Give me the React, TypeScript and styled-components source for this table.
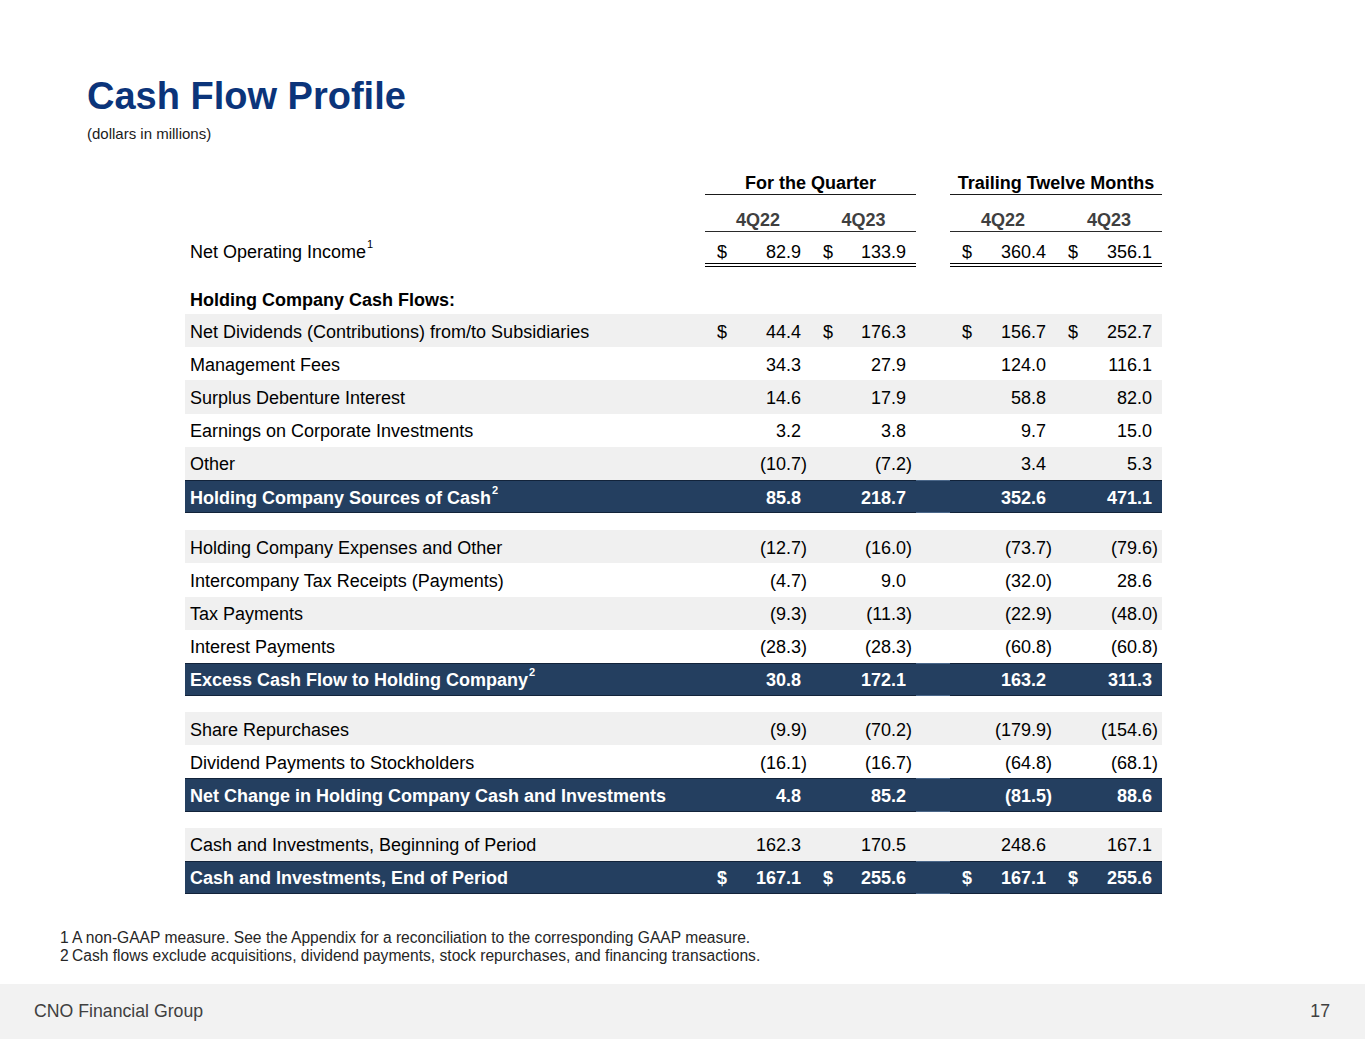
import React from "react";
import styled, { createGlobalStyle, css } from "styled-components";

const GlobalStyle = createGlobalStyle`
  html, body { margin: 0; padding: 0; background: #ffffff; }
  body { font-family: "Liberation Sans", Arial, sans-serif; color: #000; }
`;

const Slide = styled.div`
  width: 1365px;
  height: 1055px;
  position: relative;
  overflow: hidden;
  display: flex;
  flex-direction: column;
`;

const Header = styled.header`
  padding: 77px 0 0 87px;
`;

const Title = styled.h1`
  margin: 0;
  font-size: 38px;
  line-height: 38px;
  font-weight: 700;
  color: #0b347a;
`;

const Subtitle = styled.div`
  margin-top: 10px;
  font-size: 15px;
  line-height: 18px;
  color: #1a1a1a;
`;

const TableWrap = styled.section`
  padding: 29px 0 0 185px;
  width: 977px;
`;

const COLS = "520px 106px 105px 34px 106px 106px";

const Row = styled.div`
  display: grid;
  grid-template-columns: ${COLS};
  font-size: 18px;
`;

const GroupHead = styled.div<{ $col: string }>`
  grid-column: ${(p) => p.$col};
  height: 23px;
  box-sizing: border-box;
  border-bottom: 1px solid #1a1a1a;
  text-align: center;
  font-weight: 700;
  line-height: 23px;
  color: #000;
`;

const PeriodHead = styled.div<{ $col: number }>`
  grid-column: ${(p) => p.$col};
  height: 37px;
  box-sizing: border-box;
  padding-top: 14px;
  line-height: 22px;
  border-bottom: 1px solid #2a2a2a;
  text-align: center;
  font-weight: 700;
  color: #3f3f3f;
`;

const Spacer = styled.div<{ $h: number }>`
  height: ${(p) => p.$h}px;
`;

type Variant = "plain" | "shade" | "total" | "noi" | "heading";

const Label = styled.div`
  padding-left: 5px;
  white-space: nowrap;
`;

const Value = styled.div`
  justify-content: space-between;
  padding-left: 12px;
  padding-right: 4px;
  white-space: nowrap;
`;

const Gap = styled.div``;

const DataRow = styled(Row)<{ $variant: Variant }>`
  height: ${(p) => (p.$variant === "heading" ? "48px" : p.$variant === "noi" ? "34px" : "33.2px")};
  background: ${(p) =>
    p.$variant === "shade" ? "#f0f0f0" : p.$variant === "total" ? "#243f60" : "transparent"};
  color: ${(p) => (p.$variant === "total" ? "#ffffff" : "#000000")};
  font-weight: ${(p) => (p.$variant === "total" || p.$variant === "heading" ? 700 : 400)};

  & > * {
    box-sizing: border-box;
    display: flex;
    align-items: center;
    padding-top: 3px;
  }

  ${(p) =>
    p.$variant === "total" &&
    css`
      & > * {
        border-top: 1px solid #12233a;
        border-bottom: 1px solid #12233a;
      }
      & > ${Gap} {
        border-top-color: #4a6688;
        border-bottom-color: #4a6688;
      }
    `}

  ${(p) =>
    p.$variant === "noi" &&
    css`
      & > * {
        align-items: flex-start;
        padding-top: 9px;
        line-height: 22px;
      }
      & > ${Value} {
        border-bottom: 4px double #000;
      }
    `}

  ${(p) =>
    p.$variant === "heading" &&
    css`
      & > * {
        align-items: flex-start;
        padding-top: 23px;
        line-height: 22px;
      }
    `}
`;

const Sup = styled.sup`
  font-size: 11px;
  line-height: 0;
  vertical-align: 0;
  position: relative;
  top: -10px;
  margin-left: 1px;
`;

const Hidden = styled.span`
  visibility: hidden;
`;

const Notes = styled.div`
  margin-top: 35px;
  padding-left: 60px;
  font-size: 15.6px;
  line-height: 18px;
  color: #262626;
`;

const NoteNum = styled.span`
  display: inline-block;
  width: 12px;
`;

const Footer = styled.footer`
  margin-top: 19px;
  height: 55px;
  background: #f2f2f2;
  display: flex;
  align-items: center;
  justify-content: space-between;
  padding: 0 35px 0 34px;
  font-size: 17.7px;
  color: #404040;
`;

const Num: React.FC<{ v: string }> = ({ v }) => {
  const neg = v.startsWith("(");
  return (
    <span>
      {v}
      {!neg && <Hidden>)</Hidden>}
    </span>
  );
};

const Values: React.FC<{ values: string[]; dollar?: boolean }> = ({ values, dollar }) => (
  <>
    <Value>
      <span>{dollar ? "$" : ""}</span>
      <Num v={values[0]} />
    </Value>
    <Value>
      <span>{dollar ? "$" : ""}</span>
      <Num v={values[1]} />
    </Value>
    <Gap />
    <Value>
      <span>{dollar ? "$" : ""}</span>
      <Num v={values[2]} />
    </Value>
    <Value>
      <span>{dollar ? "$" : ""}</span>
      <Num v={values[3]} />
    </Value>
  </>
);

type Line = { label: string; values: string[]; dollar?: boolean; sup?: string };
type Section = { rows: Line[]; total: Line };

const sections: Section[] = [
  {
    rows: [
      { label: "Net Dividends (Contributions) from/to Subsidiaries", values: ["44.4", "176.3", "156.7", "252.7"], dollar: true },
      { label: "Management Fees", values: ["34.3", "27.9", "124.0", "116.1"] },
      { label: "Surplus Debenture Interest", values: ["14.6", "17.9", "58.8", "82.0"] },
      { label: "Earnings on Corporate Investments", values: ["3.2", "3.8", "9.7", "15.0"] },
      { label: "Other", values: ["(10.7)", "(7.2)", "3.4", "5.3"] },
    ],
    total: { label: "Holding Company Sources of Cash", sup: "2", values: ["85.8", "218.7", "352.6", "471.1"] },
  },
  {
    rows: [
      { label: "Holding Company Expenses and Other", values: ["(12.7)", "(16.0)", "(73.7)", "(79.6)"] },
      { label: "Intercompany Tax Receipts (Payments)", values: ["(4.7)", "9.0", "(32.0)", "28.6"] },
      { label: "Tax Payments", values: ["(9.3)", "(11.3)", "(22.9)", "(48.0)"] },
      { label: "Interest Payments", values: ["(28.3)", "(28.3)", "(60.8)", "(60.8)"] },
    ],
    total: { label: "Excess Cash Flow to Holding Company", sup: "2", values: ["30.8", "172.1", "163.2", "311.3"] },
  },
  {
    rows: [
      { label: "Share Repurchases", values: ["(9.9)", "(70.2)", "(179.9)", "(154.6)"] },
      { label: "Dividend Payments to Stockholders", values: ["(16.1)", "(16.7)", "(64.8)", "(68.1)"] },
    ],
    total: { label: "Net Change in Holding Company Cash and Investments", values: ["4.8", "85.2", "(81.5)", "88.6"] },
  },
  {
    rows: [{ label: "Cash and Investments, Beginning of Period", values: ["162.3", "170.5", "248.6", "167.1"] }],
    total: { label: "Cash and Investments, End of Period", values: ["167.1", "255.6", "167.1", "255.6"], dollar: true },
  },
];

const LineRow: React.FC<{ line: Line; variant: Variant }> = ({ line, variant }) => (
  <DataRow $variant={variant}>
    <Label>
      <span>
        {line.label}
        {line.sup && <Sup>{line.sup}</Sup>}
      </span>
    </Label>
    <Values values={line.values} dollar={line.dollar} />
  </DataRow>
);

export default function App() {
  return (
    <>
      <GlobalStyle />
      <Slide>
        <Header>
          <Title>Cash Flow Profile</Title>
          <Subtitle>(dollars in millions)</Subtitle>
        </Header>

        <TableWrap>
          <Row>
            <GroupHead $col="2 / 4">For the Quarter</GroupHead>
            <GroupHead $col="5 / 7">Trailing Twelve Months</GroupHead>
          </Row>
          <Row>
            <PeriodHead $col={2}>4Q22</PeriodHead>
            <PeriodHead $col={3}>4Q23</PeriodHead>
            <PeriodHead $col={5}>4Q22</PeriodHead>
            <PeriodHead $col={6}>4Q23</PeriodHead>
          </Row>
          <LineRow
            variant="noi"
            line={{ label: "Net Operating Income", sup: "1", values: ["82.9", "133.9", "360.4", "356.1"], dollar: true }}
          />
          <DataRow $variant="heading">
            <Label>Holding Company Cash Flows:</Label>
          </DataRow>
          {sections.map((s, si) => (
            <React.Fragment key={si}>
              {si > 0 && <Spacer $h={si === 1 ? 17 : 16} />}
              {s.rows.map((r, ri) => (
                <LineRow key={ri} line={r} variant={ri % 2 === 0 ? "shade" : "plain"} />
              ))}
              <LineRow line={s.total} variant="total" />
            </React.Fragment>
          ))}
        </TableWrap>

        <Notes>
          <div>
            <NoteNum>1</NoteNum>A non-GAAP measure. See the Appendix for a reconciliation to the corresponding GAAP measure.
          </div>
          <div>
            <NoteNum>2</NoteNum>Cash flows exclude acquisitions, dividend payments, stock repurchases, and financing transactions.
          </div>
        </Notes>

        <Footer>
          <span>CNO Financial Group</span>
          <span>17</span>
        </Footer>
      </Slide>
    </>
  );
}
